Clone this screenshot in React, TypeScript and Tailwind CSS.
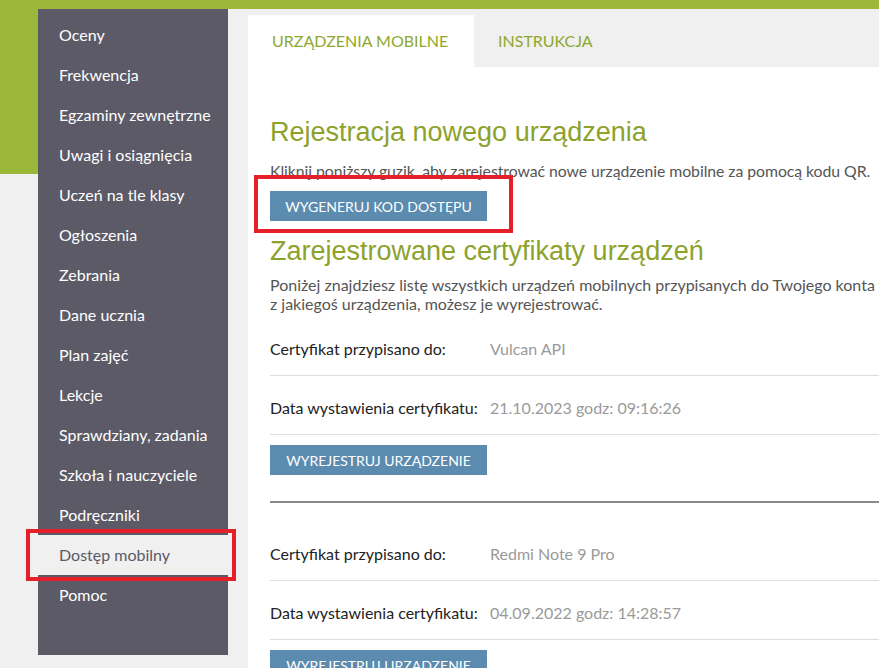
import React from "react";

const menu = [
  "Oceny",
  "Frekwencja",
  "Egzaminy zewnętrzne",
  "Uwagi i osiągnięcia",
  "Uczeń na tle klasy",
  "Ogłoszenia",
  "Zebrania",
  "Dane ucznia",
  "Plan zajęć",
  "Lekcje",
  "Sprawdziany, zadania",
  "Szkoła i nauczyciele",
  "Podręczniki",
  "Dostęp mobilny",
  "Pomoc",
];

function Row({ label, value }: { label: string; value: string }) {
  return (
    <div className="flex h-[59px] pt-[22px] leading-[20px] border-b border-[#dddddd] text-[16px]">
      <div className="w-[220px] text-[#222222]">{label}</div>
      <div className="text-[#9a9a9a]">{value}</div>
    </div>
  );
}

function Cert({ name, date }: { name: string; date: string }) {
  return (
    <div className="flex flex-col">
      <Row label="Certyfikat przypisano do:" value={name} />
      <Row label="Data wystawienia certyfikatu:" value={date} />
      <div className="mt-[10px]">
        <button className="w-[217px] h-[30px] bg-[#5b8baf] text-white text-[14px]">
          WYREJESTRUJ URZĄDZENIE
        </button>
      </div>
    </div>
  );
}

export default function App() {
  return (
    <div
      className="relative w-[879px] h-[668px] overflow-hidden bg-[#f0f0f0]"
      style={{ fontFamily: "Lato, 'Noto Sans', sans-serif" }}
    >
      <div className="h-[9px] bg-[#9bb83b]" />
      <div className="flex">
        <div className="w-[38px] h-[165px] bg-[#9bb83b] shrink-0" />
        <nav className="w-[190px] h-[646px] bg-[#5b5a66] shrink-0 pt-[6px]">
          {menu.map((m) => (
            <div
              key={m}
              className={
                "h-[40px] flex items-center pl-[21px] text-[16px] " +
                (m === "Dostęp mobilny" ? "bg-[#f0f0f0] text-[#5b5a66]" : "text-white")
              }
            >
              {m}
            </div>
          ))}
        </nav>
        <main className="ml-[20px] mt-[6px] w-[900px] shrink-0 bg-white">
          <div className="flex h-[52px] bg-[#f0f0f0]">
            <div className="w-[226px] bg-white pl-[24px] flex items-center text-[16px] text-[#8ea82e]">
              URZĄDZENIA MOBILNE
            </div>
            <div className="pl-[24px] flex items-center text-[16px] text-[#8ea82e]">
              INSTRUKCJA
            </div>
          </div>
          <div className="pl-[22px] pt-[49px]">
            <h1
              className="text-[27px] leading-[32px] text-[#8ca22c]"
              style={{ fontFamily: "'Liberation Sans', Arial, sans-serif" }}
            >
              Rejestracja nowego urządzenia
            </h1>
            <p className="mt-[13px] text-[15.8px] tracking-[-0.05px] leading-[20px] text-[#555555]">
              Kliknij poniższy guzik, aby zarejestrować nowe urządzenie mobilne za pomocą kodu QR.
            </p>
            <button className="mt-[10px] w-[217px] h-[30px] bg-[#5b8baf] text-white text-[14px]">
              WYGENERUJ KOD DOSTĘPU
            </button>
            <h1
              className="mt-[14px] text-[27px] leading-[32px] text-[#8ca22c]"
              style={{ fontFamily: "'Liberation Sans', Arial, sans-serif" }}
            >
              Zarejestrowane certyfikaty urządzeń
            </h1>
            <p className="mt-[8px] text-[16px] leading-[19px] text-[#555555] whitespace-nowrap">
              Poniżej znajdziesz listę wszystkich urządzeń mobilnych przypisanych do Twojego konta w dzienniku. Jeśli nie korzystasz już
              <br />z jakiegoś urządzenia, możesz je wyrejestrować.
            </p>
            <div className="mt-[4px]">
              <Cert name="Vulcan API" date="21.10.2023 godz: 09:16:26" />
              <div className="mt-[26px] h-[2px] bg-[#8a8a8a]" />
              <div className="mt-[19px]">
                <Cert name="Redmi Note 9 Pro" date="04.09.2022 godz: 14:28:57" />
              </div>
            </div>
          </div>
        </main>
      </div>
      {/* annotation overlays */}
      <div className="absolute left-[26px] top-[529px] w-[210px] h-[52px] border-[4px] border-[#e5202a]" />
      <div className="absolute left-[254px] top-[175px] w-[259px] h-[58px] border-[4px] border-[#e5202a]" />
    </div>
  );
}
